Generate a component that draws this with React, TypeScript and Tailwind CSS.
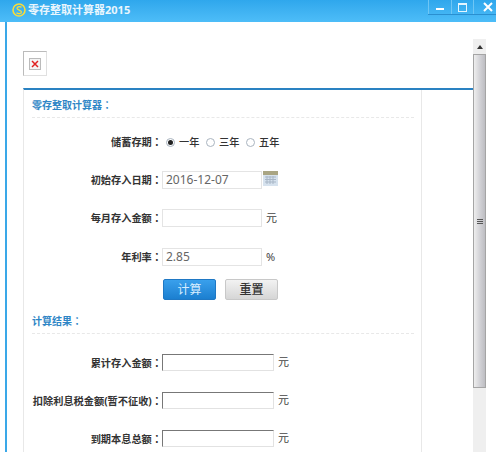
const cjk = "font-['Noto_Sans','Noto_Sans_CJK_SC',sans-serif]";

function Colon() {
  return <span className="font-['Noto_Sans_CJK_TC',sans-serif]">：</span>;
}

function Label({ children }: { children: React.ReactNode }) {
  return (
    <div className="w-[130px] shrink-0 whitespace-nowrap text-right text-[10.2px] font-bold leading-[16px] text-[#333]">
      {children}
      <Colon />
    </div>
  );
}

function Row({ label, value, unit, icon, mt }: { label: string; value?: string; unit?: string; icon?: boolean; mt: string }) {
  return (
    <div className={`flex h-[18px] items-center ${mt}`}>
      <Label>{label}</Label>
      <div className="h-[18px] w-[100px] shrink-0 border border-[#e4e4e4] bg-white pl-[3px] text-[12px] leading-[16px] text-[#666]">{value}</div>
      {unit && <span className="ml-[4px] text-[11px] text-[#444]">{unit}</span>}
      {icon && (
        <svg width="15" height="15" viewBox="0 0 15 15" className="mb-[4px] ml-[1px]">
          <rect x="0" y="0" width="15" height="15" fill="#d6e2ee" />
          <rect x="0" y="0" width="15" height="4" fill="#a9a583" />
          <path d="M2 6h11M2 8.5h11M2 11h11M4 5v8M7 5v8M10 5v8" stroke="#a8b6c6" strokeWidth="1" />
        </svg>
      )}
    </div>
  );
}

function Result({ label, mt }: { label: string; mt: string }) {
  return (
    <div className={`flex h-[17px] items-center ${mt}`}>
      <Label>{label}</Label>
      <div className="h-[17px] w-[112px] shrink-0 border border-[#e2e2e2] border-l-[#777] border-t-[#777] bg-white" />
      <span className="ml-[4px] text-[11px] text-[#444]">元</span>
    </div>
  );
}

function Radio({ on, text }: { on?: boolean; text: string }) {
  return (
    <span className="mr-[7px] flex items-center">
      <span className="mr-[4px] flex h-[9px] w-[9px] items-center justify-center rounded-full border border-[#a9b4bf] bg-white">
        {on && <span className="h-[5px] w-[5px] rounded-full bg-[#222]" />}
      </span>
      <span className="w-[20px] whitespace-nowrap text-[10.2px] font-medium leading-[16px] text-[#333]">{text}</span>
    </span>
  );
}

function Heading({ children, mt }: { children: React.ReactNode; mt: string }) {
  return (
    <div className={`${mt} h-[21px] w-[382px] border-b border-dashed border-[#e8e8e8] text-[10px] font-bold leading-[16px] text-[#2f86c6]`}>
      {children}
      <Colon />
    </div>
  );
}

export default function App() {
  return (
    <div className={`${cjk} h-[452px] w-[496px] overflow-hidden bg-white`}>
      <div className="flex h-[22px] items-start justify-between bg-gradient-to-b from-[#2fa7ec] to-[#4dbdf8]">
        <div className="flex h-[20px] items-center pl-[12px]">
          <svg width="14" height="14" viewBox="0 0 14 14" className="mr-[2px]">
            <circle cx="7" cy="7" r="6" fill="none" stroke="#f7dc3c" strokeWidth="1.6" />
            <path d="M9.5 4.4C8.5 3.4 5 3.4 5 5.3S9.5 7 9.5 9 6 11.2 4.5 9.8" fill="none" stroke="#f7dc3c" strokeWidth="1.3" />
          </svg>
          <span className="text-[11px] font-bold text-[#eaf6fd]">零存整取计算器2015</span>
        </div>
        <div className="flex h-[15px] border-b border-[#2a8fd0]">
          <div className="flex w-[23px] items-center justify-center border-l border-[#6ec6f5]">
            <div className="mt-[3px] h-[2px] w-[8px] bg-white" />
          </div>
          <div className="flex w-[22px] items-center justify-center border-l border-[#6ec6f5]">
            <div className="h-[9px] w-[9px] border border-t-2 border-[#e4f5ff]" />
          </div>
          <div className="flex w-[23px] items-center justify-end border-l border-[#6ec6f5] pr-[3px]">
            <svg width="10" height="10" viewBox="0 0 10 10"><path d="M1 1l8 8M9 1l-8 8" stroke="#fff" strokeWidth="2" /></svg>
          </div>
        </div>
      </div>
      <div className="relative ml-[5px] h-[430px] border-l-2 border-[#3aa8e8]">
        <div className="absolute right-[10px] top-[17px] flex h-[413px] w-[13px] flex-col bg-[#efefef]">
          <div className="flex h-[15px] items-center justify-center">
            <div className="h-0 w-0 border-x-[3px] border-b-[4px] border-x-transparent border-b-[#333]" />
          </div>
          <div className="flex h-[334px] items-center justify-center border border-[#a5a5a5] bg-gradient-to-r from-[#eeeeee] via-[#d4d4d8] to-[#bdbdc2]">
            <div className="flex w-[6px] flex-col gap-[1px]">
              <div className="h-px bg-[#555]" /><div className="h-px bg-[#555]" /><div className="h-px bg-[#555]" />
            </div>
          </div>
        </div>
        <div className="pl-[16px] pt-[29px]">
          <div className="flex h-[25px] w-[24px] items-center justify-center border border-[#e0e0e0] border-l-[#bbb] border-t-[#bbb]">
            <div className="flex h-[12px] w-[12px] items-center justify-center border border-[#bbb] bg-[#f4f4f4]">
              <svg width="8" height="8" viewBox="0 0 8 8"><path d="M1 1l6 6M7 1l-6 6" stroke="#e02020" strokeWidth="1.5" /></svg>
            </div>
          </div>
          <div className="mt-[12px] flex h-[400px] w-[450px] border-t-2 border-l border-[#e8e8e8] border-t-[#2a82c2]">
            <div className="w-[398px] border-r border-[#e8e8e8] pl-[8px] pt-[7px]">
              <Heading mt="">零存整取计算器</Heading>
              <div className="mt-[16px] flex h-[16px] items-center">
                <Label>储蓄存期</Label>
                <div className="ml-[4px] flex"><Radio on text="一年" /><Radio text="三年" /><Radio text="五年" /></div>
              </div>
              <Row label="初始存入日期" value="2016-12-07" icon mt="mt-[21px]" />
              <Row label="每月存入金额" unit="元" mt="mt-[20px]" />
              <Row label="年利率" value="2.85" unit="%" mt="mt-[21px]" />
              <div className="ml-[131px] mt-[13px] flex gap-[9px]">
                <div className="h-[21px] w-[53px] rounded-[2px] border border-[#1f78c4] bg-gradient-to-b from-[#39a0ec] to-[#1b7fd0] text-center text-[12px] leading-[19px] text-[#d8eeff]">计算</div>
                <div className="h-[21px] w-[53px] rounded-[2px] border border-[#c8c8c8] bg-gradient-to-b from-[#f2f2f2] to-[#d6d6d6] text-center text-[12px] font-medium leading-[19px] text-[#333]">重置</div>
              </div>
              <Heading mt="mt-[13px]">计算结果</Heading>
              <Result label="累计存入金额" mt="mt-[20px]" />
              <Result label="扣除利息税金额(暂不征收)" mt="mt-[21px]" />
              <Result label="到期本息总额" mt="mt-[21px]" />
            </div>
          </div>
        </div>
      </div>
    </div>
  );
}
